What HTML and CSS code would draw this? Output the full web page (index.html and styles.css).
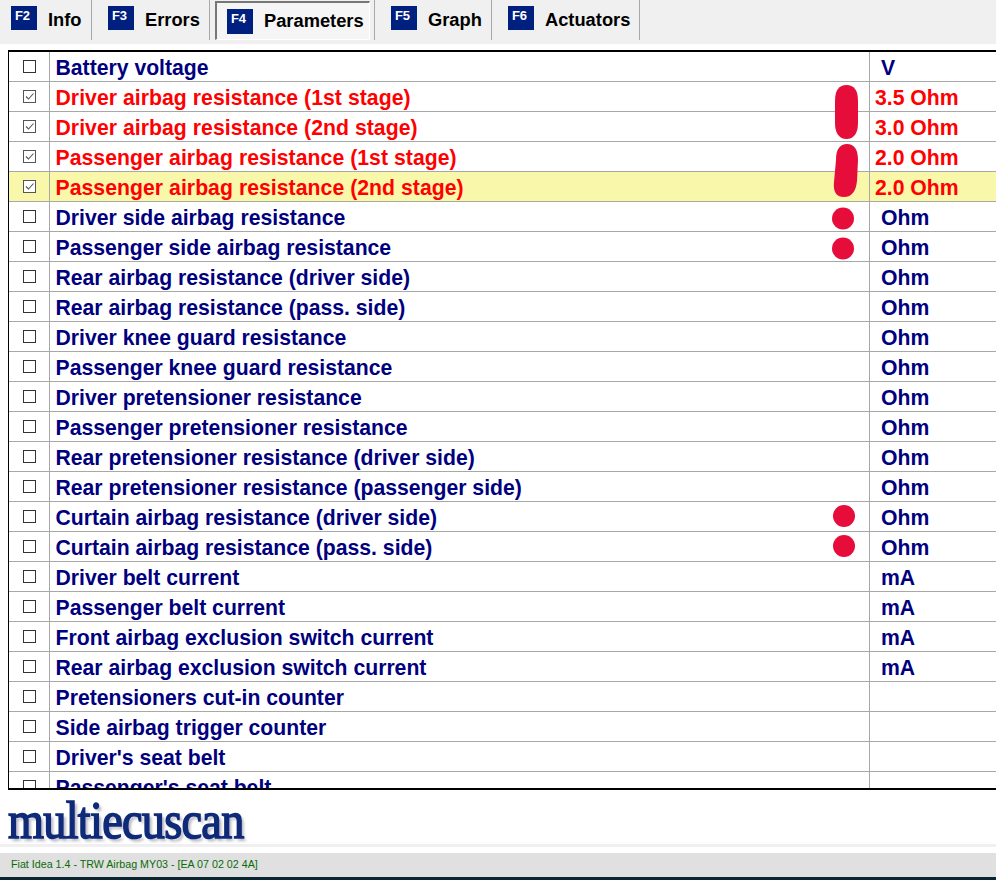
FILE: index.html
```html
<!DOCTYPE html>
<html lang="en">
<head>
  <meta charset="UTF-8">
  <title>Multiecuscan - Parameters</title>
  <link rel="stylesheet" href="styles.css">
</head>
<body>
  <div class="tabs">
    <div class="tab tab-info"><span class="key">F2</span>Info</div>
    <div class="tab tab-errors"><span class="key">F3</span>Errors</div>
    <div class="tab tab-params"><div class="pressed"><span class="key">F4</span>Parameters</div></div>
    <div class="tab tab-graph"><span class="key">F5</span>Graph</div>
    <div class="tab tab-actuators"><span class="key">F6</span>Actuators</div>
  </div>

  <div class="main">
    <div class="list">
      <div class="row"><div class="c-check"><span class="box"></span></div><div class="c-name">Battery voltage</div><div class="c-val">V</div></div>
      <div class="row on"><div class="c-check"><span class="box"><svg viewBox="0 0 11 11"><path d="M2 5.5 4.5 8 9.5 2.5"/></svg></span></div><div class="c-name">Driver airbag resistance (1st stage)</div><div class="c-val">3.5 Ohm</div></div>
      <div class="row on"><div class="c-check"><span class="box"><svg viewBox="0 0 11 11"><path d="M2 5.5 4.5 8 9.5 2.5"/></svg></span></div><div class="c-name">Driver airbag resistance (2nd stage)</div><div class="c-val">3.0 Ohm</div></div>
      <div class="row on"><div class="c-check"><span class="box"><svg viewBox="0 0 11 11"><path d="M2 5.5 4.5 8 9.5 2.5"/></svg></span></div><div class="c-name">Passenger airbag resistance (1st stage)</div><div class="c-val">2.0 Ohm</div></div>
      <div class="row on sel"><div class="c-check"><span class="box"><svg viewBox="0 0 11 11"><path d="M2 5.5 4.5 8 9.5 2.5"/></svg></span></div><div class="c-name">Passenger airbag resistance (2nd stage)</div><div class="c-val">2.0 Ohm</div></div>
      <div class="row"><div class="c-check"><span class="box"></span></div><div class="c-name">Driver side airbag resistance</div><div class="c-val">Ohm</div></div>
      <div class="row"><div class="c-check"><span class="box"></span></div><div class="c-name">Passenger side airbag resistance</div><div class="c-val">Ohm</div></div>
      <div class="row"><div class="c-check"><span class="box"></span></div><div class="c-name">Rear airbag resistance (driver side)</div><div class="c-val">Ohm</div></div>
      <div class="row"><div class="c-check"><span class="box"></span></div><div class="c-name">Rear airbag resistance (pass. side)</div><div class="c-val">Ohm</div></div>
      <div class="row"><div class="c-check"><span class="box"></span></div><div class="c-name">Driver knee guard resistance</div><div class="c-val">Ohm</div></div>
      <div class="row"><div class="c-check"><span class="box"></span></div><div class="c-name">Passenger knee guard resistance</div><div class="c-val">Ohm</div></div>
      <div class="row"><div class="c-check"><span class="box"></span></div><div class="c-name">Driver pretensioner resistance</div><div class="c-val">Ohm</div></div>
      <div class="row"><div class="c-check"><span class="box"></span></div><div class="c-name">Passenger pretensioner resistance</div><div class="c-val">Ohm</div></div>
      <div class="row"><div class="c-check"><span class="box"></span></div><div class="c-name">Rear pretensioner resistance (driver side)</div><div class="c-val">Ohm</div></div>
      <div class="row"><div class="c-check"><span class="box"></span></div><div class="c-name">Rear pretensioner resistance (passenger side)</div><div class="c-val">Ohm</div></div>
      <div class="row"><div class="c-check"><span class="box"></span></div><div class="c-name">Curtain airbag resistance (driver side)</div><div class="c-val">Ohm</div></div>
      <div class="row"><div class="c-check"><span class="box"></span></div><div class="c-name">Curtain airbag resistance (pass. side)</div><div class="c-val">Ohm</div></div>
      <div class="row"><div class="c-check"><span class="box"></span></div><div class="c-name">Driver belt current</div><div class="c-val">mA</div></div>
      <div class="row"><div class="c-check"><span class="box"></span></div><div class="c-name">Passenger belt current</div><div class="c-val">mA</div></div>
      <div class="row"><div class="c-check"><span class="box"></span></div><div class="c-name">Front airbag exclusion switch current</div><div class="c-val">mA</div></div>
      <div class="row"><div class="c-check"><span class="box"></span></div><div class="c-name">Rear airbag exclusion switch current</div><div class="c-val">mA</div></div>
      <div class="row"><div class="c-check"><span class="box"></span></div><div class="c-name">Pretensioners cut-in counter</div><div class="c-val"></div></div>
      <div class="row"><div class="c-check"><span class="box"></span></div><div class="c-name">Side airbag trigger counter</div><div class="c-val"></div></div>
      <div class="row"><div class="c-check"><span class="box"></span></div><div class="c-name">Driver's seat belt</div><div class="c-val"></div></div>
      <div class="row"><div class="c-check"><span class="box"></span></div><div class="c-name">Passenger's seat belt</div><div class="c-val"></div></div>

      <!-- pen marks drawn over the list -->
      <svg class="marks" width="60" height="520" viewBox="0 0 60 520">
        <path d="M23 51 C23 40 27 35 34.500 35 C42 35 46 40 46 51 L46 73 C46 83 42 89 34.500 89 C27 89 23 83 23 73Z"/>
        <path d="M24 110 C24 99 28 94 35 94 C42 94 46 99 46 110 L45 131 C44 141 40 147 32 147 C24 147 21 141 22 132Z"/>
        <circle cx="31" cy="168.500" r="11"/>
        <circle cx="31" cy="198.500" r="11"/>
        <circle cx="32" cy="466" r="11"/>
        <circle cx="32" cy="496" r="11"/>
      </svg>
    </div>

    <div class="logo">multiecuscan</div>
  </div>

  <div class="band"></div>
  <div class="status">Fiat Idea 1.4 - TRW Airbag MY03 - [EA 07 02 02 4A]</div>
  <div class="taskbar"></div>
</body>
</html>
```

FILE: styles.css
```css
body {
  margin: 0;
  height: 880px;
  overflow: hidden;
  display: flex;
  flex-direction: column;
  background: #fff;
  font-family: "Liberation Sans", Arial, sans-serif;
}

/* tab strip */
.tabs {
  height: 44px;
  flex: none;
  display: flex;
  background: #f0f0f0;
}
.tab {
  height: 40px;
  display: flex;
  align-items: center;
  border-right: 1px solid #a8a8a8;
  font-size: 18.300px;
  font-weight: bold;
  color: #000;
  box-sizing: border-box;
}
.tab-info { width: 92px; padding-left: 11px; }
.tab-errors { width: 118px; padding-left: 16px; }
.tab-params { width: 165px; padding-left: 5px; }
.tab-graph { width: 117px; padding-left: 16px; }
.tab-actuators { width: 148px; padding-left: 16px; }
.key {
  width: 26px;
  height: 24px;
  margin: 0 11px 4px 0;
  flex: none;
  background: #00207f;
  color: #fff;
  font-size: 13px;
  line-height: 19px;
  text-align: center;
  box-sizing: border-box;
  padding-right: 3px;
}
.pressed {
  width: 155px;
  height: 39px;
  margin-top: 1px;
  display: flex;
  align-items: center;
  box-sizing: border-box;
  padding-left: 10px;
  border: 1px solid #fff;
  border-top: 2px solid #777;
  border-left: 2px solid #777;
  background: #f5f5f5;
}
.pressed .key {
  height: 25px;
  margin-bottom: 0;
}

/* parameter list */
.main {
  height: 800px;
  flex: none;
  box-sizing: border-box;
  padding: 6px 0 0 8px;
}
.list {
  position: relative;
  height: 736px;
  overflow: hidden;
  border: 2px solid #000;
  border-width: 2px 0 2px 1px;
}
.row {
  height: 30px;
  display: flex;
  box-sizing: border-box;
  border-bottom: 1px solid #a8a8a8;
  font-size: 21.200px;
  font-weight: bold;
  color: #00007f;
}
.row.on { color: #f00; }
.row.sel { background: #f9f7a9; }
.c-check {
  width: 40px;
  flex: none;
  display: flex;
  align-items: center;
  justify-content: center;
  border-right: 1px solid #a8a8a8;
}
.box {
  width: 13px;
  height: 13px;
  box-sizing: border-box;
  border: 1px solid #333;
  background: #fff;
  display: block;
}
.on .box {
  border-color: #555;
}
.box svg {
  display: block;
  width: 11px;
  height: 11px;
}
.box path {
  fill: none;
  stroke: #555;
  stroke-width: 1.100;
}
.c-name {
  width: 820px;
  flex: none;
  padding: 1px 0 0 5.500px;
  box-sizing: border-box;
  line-height: 30px;
  border-right: 1px solid #a8a8a8;
  white-space: nowrap;
}
.on .c-name { letter-spacing: 0.050px; }
.c-val {
  flex: 1;
  padding: 1px 0 0 11px;
  line-height: 30px;
  white-space: nowrap;
}
.on .c-val { padding-left: 5px; }
.marks {
  position: absolute;
  left: 803px;
  top: -2px;
  filter: blur(0.4px);
}
.marks path, .marks circle {
  fill: #e60d3a;
}

/* logo + footer */
.logo {
  height: 48px;
  margin-top: 7px;
  font-family: "Liberation Serif", "Times New Roman", serif;
  font-size: 52px;
  line-height: 48px;
  letter-spacing: -0.800px;
  color: #0f2a78;
  -webkit-text-stroke: 1.600px #0f2a78;
  text-shadow: 3px 3px 3px #b4b4c0;
  transform: scaleX(0.89);
  transform-origin: left center;
  white-space: nowrap;
}
.band {
  height: 3px;
  flex: none;
  margin-bottom: 6px;
  background: #f0f0f0;
}
.status {
  height: 24px;
  flex: none;
  padding-left: 11px;
  background: #e0e0e0;
  color: #0a6b0a;
  font-size: 10.700px;
  line-height: 22px;
}
.taskbar {
  height: 3px;
  flex: none;
  background: #0a2530;
}
```
